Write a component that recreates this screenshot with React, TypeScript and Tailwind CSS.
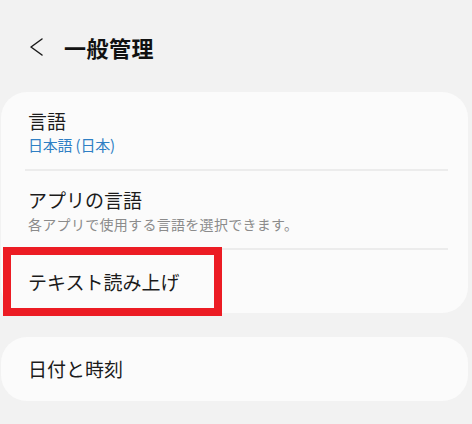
import { ReactNode } from 'react';

const FONT = "font-['Noto_Sans_CJK_JP','Noto_Sans',sans-serif]";

function Row({ title, sub, subClass, height, divider }: { title: string; sub?: string; subClass?: string; height: string; divider?: boolean }) {
  return (
    <div className={`relative flex flex-col justify-center pl-[27px] ${height}`}>
      <span className="text-[19px] leading-[26px] text-[#1b1b1b]">{title}</span>
      {sub && <span className={`mt-[1px] leading-[20px] ${subClass}`}>{sub}</span>}
      {divider && <div className="absolute bottom-0 left-[24px] right-[20px] h-[2px] bg-[#ececec]" />}
    </div>
  );
}

function Card({ children, className = '' }: { children: ReactNode; className?: string }) {
  return <div className={`ml-[1px] mr-[4px] rounded-[26px] bg-[#fbfbfb] ${className}`}>{children}</div>;
}

export default function App() {
  return (
    <div className={`relative h-[424px] w-[472px] overflow-hidden bg-[#f2f2f2] ${FONT}`}>
      {/* header */}
      <div className="flex h-[92px] items-center pl-[28px] pt-[2px]">
        <svg width="16" height="20" viewBox="0 0 16 20">
          <path d="M14 2 L3 10 L14 18" fill="none" stroke="#1a1a1a" strokeWidth="1.5" strokeLinecap="round" strokeLinejoin="round" />
        </svg>
        <h1 className="ml-[20px] text-[22px] font-bold tracking-[0.5px] text-[#111]">一般管理</h1>
      </div>

      <Card>
        <Row title="言語" sub="日本語 (日本)" subClass="text-[15px] text-[#2f7fc4] tracking-[-0.2px]" height="h-[79px]" divider />
        <Row
          title="アプリの言語"
          sub="各アプリで使用する言語を選択できます。"
          subClass="text-[14px] tracking-[0.3px] text-[#8b8b8b]"
          height="h-[79px]"
          divider
        />
        <Row title="テキスト読み上げ" height="h-[63px]" />
      </Card>

      <Card className="mt-[24px]">
        <Row title="日付と時刻" height="h-[64px]" />
      </Card>

      {/* red highlight annotation */}
      <div className="absolute left-[3px] top-[247px] h-[69px] w-[219px] border-[8px] border-[#ec1c24]" />
    </div>
  );
}
